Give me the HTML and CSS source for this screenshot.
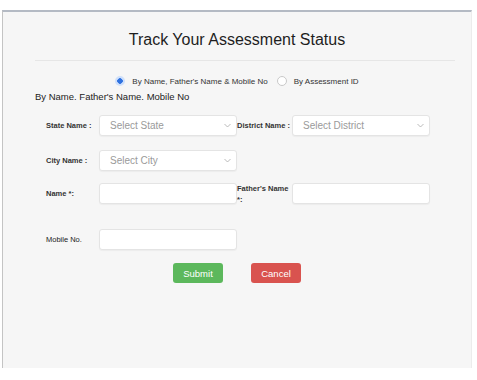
FILE: index.html
```html
<!DOCTYPE html>
<html lang="en">
<head>
  <meta charset="UTF-8">
  <meta name="viewport" content="width=device-width, initial-scale=1.0">
  <title>Track Your Assessment Status</title>
  <link rel="stylesheet" href="styles.css">
</head>
<body>
  <div class="panel">
    <h1 class="title">Track Your Assessment Status</h1>
    <hr class="rule">
    <div class="modes">
      <label class="mode"><span class="radio checked"></span>By Name, Father's Name &amp; Mobile No</label>
      <label class="mode"><span class="radio"></span>By Assessment ID</label>
    </div>
    <h2 class="subtitle">By Name. Father's Name. Mobile No</h2>

    <form class="form">
      <div class="row">
        <label class="label">State Name :</label>
        <div class="field select">
          <span class="placeholder">Select State</span>
          <svg class="chevron" width="7" height="5" viewBox="0 0 7 5"><path d="M0.5 1 L3.5 4 L6.5 1" fill="none" stroke="#aaa" stroke-width="0.8"/></svg>
        </div>
        <label class="label label-wide">District Name :</label>
        <div class="field select">
          <span class="placeholder">Select District</span>
          <svg class="chevron" width="7" height="5" viewBox="0 0 7 5"><path d="M0.5 1 L3.5 4 L6.5 1" fill="none" stroke="#aaa" stroke-width="0.8"/></svg>
        </div>
      </div>
      <div class="row row-city">
        <label class="label">City Name :</label>
        <div class="field select">
          <span class="placeholder">Select City</span>
          <svg class="chevron" width="7" height="5" viewBox="0 0 7 5"><path d="M0.5 1 L3.5 4 L6.5 1" fill="none" stroke="#aaa" stroke-width="0.8"/></svg>
        </div>
      </div>
      <div class="row row-name">
        <label class="label">Name *:</label>
        <input class="field" type="text">
        <label class="label label-wide">Father's Name *:</label>
        <input class="field" type="text">
      </div>
      <div class="row row-mobile">
        <label class="label label-plain">Mobile No.</label>
        <input class="field" type="text">
      </div>
      <div class="actions">
        <button type="button" class="btn btn-submit">Submit</button>
        <button type="button" class="btn btn-cancel">Cancel</button>
      </div>
    </form>
  </div>
</body>
</html>
```

FILE: styles.css
```css
body {
  margin: 0;
  background: #fff;
  font-family: "Liberation Sans", Arial, sans-serif;
  color: #222;
}
.panel {
  box-sizing: border-box;
  width: 470px;
  height: 358px;
  margin: 10px 0 0 2px;
  background: #f6f6f6;
  border-top: 2px solid #b4bac4;
  border-left: 1px solid #c4c4c4;
  border-right: 1px solid #ececec;
}
.title {
  margin: 17px 0 0;
  font-size: 16px;
  line-height: 21px;
  font-weight: normal;
  text-align: center;
  color: #1e1e1e;
}
.rule {
  margin: 10px 16px 0 32px;
  border: 0;
  border-top: 1px solid #e6e6e6;
}
.modes {
  display: flex;
  justify-content: center;
  gap: 9px;
  margin-top: 14px;
  height: 12px;
  font-size: 8px;
  color: #333;
}
.mode {
  display: flex;
  align-items: center;
  gap: 7px;
}
.radio {
  box-sizing: border-box;
  width: 10px;
  height: 10px;
  border-radius: 50%;
  border: 1px solid #c9c9c9;
  background: #fff;
}
.radio.checked {
  border: 2px solid #cfe0fb;
  background: radial-gradient(circle, #2f72e0 0 2.6px, #cfe0fb 3px);
}
.subtitle {
  margin: 3px 0 0 32px;
  font-size: 9.5px;
  line-height: 13px;
  font-weight: normal;
  color: #222;
}
.form {
  padding-left: 43px;
  margin-top: 12px;
}
.row {
  display: flex;
  align-items: center;
  height: 21px;
}
.row-city {
  margin-top: 14px;
}
.row-name {
  margin-top: 12px;
}
.row-mobile {
  margin-top: 25px;
}
.label {
  width: 53px;
  font-size: 7.5px;
  font-weight: bold;
  color: #333;
  line-height: 11px;
}
.label-wide {
  width: 55px;
}
.label-plain {
  font-weight: normal;
  color: #222;
}
.field {
  box-sizing: border-box;
  width: 138px;
  height: 21px;
  margin: 0;
  background: #fff;
  border: 1px solid #e4e4e4;
  border-radius: 3px;
  box-shadow: 0 1px 1px rgba(0, 0, 0, 0.04);
}
.select {
  display: flex;
  align-items: center;
  justify-content: space-between;
  padding: 0 5px 0 10px;
}
.placeholder {
  font-size: 10px;
  color: #9a9a9a;
}
.chevron {
  display: block;
}
.actions {
  display: flex;
  justify-content: center;
  gap: 28px;
  margin: 13px 0 0 -43px;
}
.btn {
  width: 50px;
  height: 20px;
  border: 0;
  border-radius: 3px;
  font-family: "Liberation Sans", Arial, sans-serif;
  font-size: 9.5px;
  color: #fff;
}
.btn-submit {
  background: #5cb85c;
}
.btn-cancel {
  background: #d9534f;
}
```
